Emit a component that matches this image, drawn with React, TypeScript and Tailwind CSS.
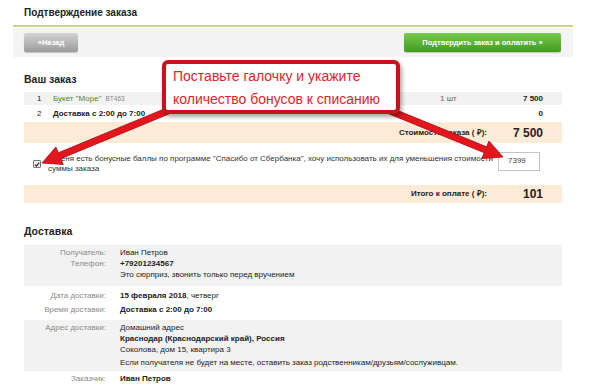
import React from 'react';

const arrowPoints = (x1: number, y1: number, x2: number, y2: number) => {
  const dx = x2 - x1;
  const dy = y2 - y1;
  const len = Math.sqrt(dx * dx + dy * dy);
  const ux = dx / len;
  const uy = dy / len;
  const px = -uy;
  const py = ux;
  const shaft = 3.2;
  const headLen = 19;
  const headW = 9.5;
  const bx = x2 - ux * headLen;
  const by = y2 - uy * headLen;
  const pts = [
    [x1 + px * shaft, y1 + py * shaft],
    [bx + px * shaft, by + py * shaft],
    [bx + px * headW, by + py * headW],
    [x2, y2],
    [bx - px * headW, by - py * headW],
    [bx - px * shaft, by - py * shaft],
    [x1 - px * shaft, y1 - py * shaft],
  ];
  return pts.map((p) => p.join(',')).join(' ');
};

const Label = ({ children }: { children: React.ReactNode }) => (
  <div className="w-[82px] shrink-0 text-right text-[#8a8a8a]">{children}</div>
);

export default function App() {
  return (
    <div className="relative w-[600px] h-[387px] overflow-hidden bg-white font-['Liberation_Sans',Arial,sans-serif] text-[#222]">
      <div className="ml-[13px] w-[560px]">
        <div className="h-[25px] pl-[11px] pt-[6px] text-[10px] font-bold leading-[13px]">Подтверждение заказа</div>
        <div className="h-[2px] bg-[#c8d38c]" />
        <div className="mt-[1px] h-[29px] bg-[#f4f4f4] flex items-center justify-between pl-[11px] pr-[12px]">
          <div className="w-[54px] h-[19px] rounded-[2px] bg-gradient-to-b from-[#d4d4d4] to-[#9c9c9c] flex items-center justify-center text-[7.5px] font-bold text-white shadow-[0_1px_1px_rgba(0,0,0,0.2)]">
            «Назад
          </div>
          <div className="w-[157px] h-[19px] rounded-[2px] bg-gradient-to-b from-[#78c94f] to-[#3e9d1c] flex items-center justify-center text-[7.5px] font-bold text-white shadow-[0_1px_1px_rgba(0,0,0,0.2)]">
            Подтвердить заказ и оплатить »
          </div>
        </div>

        <div className="px-[11px]">
          <div className="mt-[16px] text-[10.5px] font-bold leading-[13px]">Ваш заказ</div>

          <div className="mt-[6px] text-[8px]">
            <div className="h-[13px] bg-[#f2f2f2] flex items-center">
              <div className="w-[29px] pl-[13px]">1</div>
              <div className="flex-1 flex items-baseline gap-[4px]">
                <span className="text-[#4a8a2a]">Букет "Море"</span>
                <span className="text-[6.5px] text-[#888]">BT463</span>
              </div>
              <div className="w-[78px] text-[#666]">1 шт</div>
              <div className="w-[25px] text-right font-bold mr-[19px]">7 500</div>
            </div>
            <div className="h-[17px] flex items-center">
              <div className="w-[29px] pl-[13px]">2</div>
              <div className="flex-1 font-bold">Доставка с 2:00 до 7:00</div>
              <div className="mr-[19px] font-bold">0</div>
            </div>
            <div className="h-[21px] bg-[#fdead7] flex items-center justify-end">
              <div className="font-bold">Стоимость заказа ( ₽):</div>
              <div className="w-[56px] mr-[19px] text-right text-[12px] font-bold">7 500</div>
            </div>
            <div className="h-[42px] flex items-center">
              <div className="w-[24px] pl-[9px] flex items-center">
                <span className="w-[8px] h-[8px] border border-[#777] bg-[#eee] rounded-[1px] flex items-center justify-center">
                  <svg width="7" height="7" viewBox="0 0 10 10">
                    <path d="M1.5 5.2 L4 7.8 L8.7 2" fill="none" stroke="#222" strokeWidth="1.8" />
                  </svg>
                </span>
              </div>
              <div className="flex-1 leading-[10px] text-[#333]">
                У меня есть бонусные баллы по программе "Спасибо от Сбербанка", хочу использовать их для уменьшения стоимости
                <br />
                суммы заказа
              </div>
              <div className="w-[42px] h-[19px] mr-[22px] border border-[#c4c4c4] bg-white flex items-center pl-[9px] text-[#444] mb-[6px]">
                7399
              </div>
            </div>
            <div className="h-[18px] bg-[#fdead7] flex items-center justify-end">
              <div className="font-bold">Итого к оплате ( ₽):</div>
              <div className="w-[56px] mr-[19px] text-right text-[12px] font-bold">101</div>
            </div>
          </div>

          <div className="mt-[22px] text-[10.5px] font-bold leading-[13px]">Доставка</div>

          <div className="mt-[7px] text-[8px] leading-[11px]">
            <div className="bg-[#f2f2f2] pt-[2px] pb-[6px] flex gap-[14px]">
              <div className="flex flex-col">
                <Label>Получатель:</Label>
                <Label>Телефон:</Label>
              </div>
              <div className="flex flex-col">
                <div>Иван Петров</div>
                <div className="font-bold">+79201234567</div>
                <div>Это сюрприз, звонить только перед вручением</div>
              </div>
            </div>
            <div className="pt-[3px] pb-[3px] flex gap-[14px] leading-[14px]">
              <div className="flex flex-col">
                <Label>Дата доставки:</Label>
                <Label>Время доставки:</Label>
              </div>
              <div className="flex flex-col">
                <div>
                  <span className="font-bold">15 февраля 2018</span>, четверг
                </div>
                <div className="font-bold">Доставка с 2:00 до 7:00</div>
              </div>
            </div>
            <div className="bg-[#f2f2f2] pt-[2px] pb-[3px] flex gap-[14px]">
              <div className="flex flex-col">
                <Label>Адрес доставки:</Label>
              </div>
              <div className="flex flex-col">
                <div>Домашний адрес</div>
                <div className="font-bold">Краснодар (Краснодарский край), Россия</div>
                <div>Соколова, дом 15, квартира 3</div>
                <div className="mt-[2px]">Если получателя не будет на месте, оставить заказ родственникам/друзьям/сослуживцам.</div>
              </div>
            </div>
            <div className="pt-[2px] flex gap-[14px]">
              <Label>Заказчик:</Label>
              <div className="font-bold">Иван Петров</div>
            </div>
          </div>
        </div>
      </div>

      <svg className="absolute left-0 top-0 pointer-events-none" width="600" height="387">
        <polygon points={arrowPoints(170, 110, 42, 163)} fill="#e3161e" stroke="#a50d12" strokeWidth="0.8" />
        <polygon points={arrowPoints(388, 110, 503, 157)} fill="#e3161e" stroke="#a50d12" strokeWidth="0.8" />
      </svg>

      <div className="absolute left-[162px] top-[60px] w-[238px] h-[54px] rounded-[6px] border-[4px] border-[#c8121c] bg-white shadow-[2px_3px_4px_rgba(0,0,0,0.35)] pl-[7px] pt-[1px] text-[14px] leading-[23px] text-[#e1232b]">
        <div>Поставьте галочку и укажите</div>
        <div>количество бонусов к списанию</div>
      </div>
    </div>
  );
}
